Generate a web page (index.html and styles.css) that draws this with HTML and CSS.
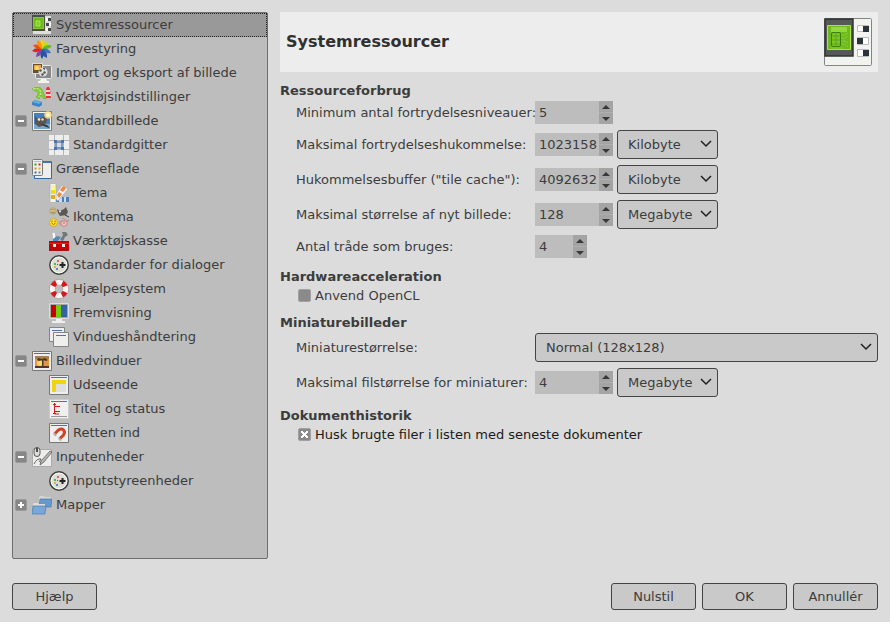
FILE: index.html
```html
<!DOCTYPE html>
<html lang="da">
<head>
<meta charset="utf-8">
<meta name="viewport" content="width=device-width, initial-scale=1">
<title>Systemressourcer</title>
<link rel="stylesheet" href="styles.css">
</head>
<body>
<div class="dialog">
<div class="panes">
<nav class="tree" aria-label="Kategorier">
<ul>
<li><a class="row selected" href="#"><svg class="icon" viewBox="0 0 20 20"><rect x=".5" y=".5" width="19" height="19" fill="#dededb" stroke="#999"/><path d="M0 0h13v16H0z" fill="#4a4e4c"/><path d="M1 2h11v12H1z" fill="#83ca2e"/><path d="M2 3h9v10H2z" fill="#6fb81c"/><path d="M4 6h4v5H4z" fill="#82cf2b" stroke="#b5e96c" stroke-width=".8"/><path d="M14 3h2v3h-2zM17 8h2v3h-2zM14 13h2v3h-2z" fill="#fff"/><path d="M16 3h3v3h-3zM14 8h3v3h-3zM16 13h3v3h-3z" fill="#41464a"/></svg>Systemressourcer</a></li>
<li><a class="row" href="#"><svg class="icon" viewBox="0 0 20 20"><path d="M10 10Q6.500 5 10 0q3.500 5 0 10" fill="#fcd20b"/><path d="M10 10q-1-6 6-8 0 6-6 8" fill="#c7dc25"/><path d="M10 10q4-6 10-3-4 4-10 3" fill="#62bd1a"/><path d="M10 10q6-2 9 4-6 1-9-4" fill="#3b75bd"/><path d="M10 10q6 3 5 9-6-2-5-9" fill="#3152a4"/><path d="M10 10q3 6 0 10-3-4 0-10" fill="#17579c"/><path d="M10 10q0 7-6 8 0-6 6-8" fill="#8048a4"/><path d="M10 10Q5 15 0 12q4-5 10-2" fill="#d8232e"/><path d="M10 10Q4 11 1 6q6-2 9 4" fill="#ef4b19"/><path d="M10 10Q4 7 5 1q6 2 5 9" fill="#ff950c"/></svg>Farvestyring</a></li>
<li><a class="row" href="#"><svg class="icon" viewBox="0 0 20 20"><rect x="3.500" y="2.500" width="16" height="13" rx="1" fill="#888" stroke="#e8e8e8"/><path d="M9 16h5l1 2h2v2H6v-2h2z" fill="#f2f2f0"/><rect x=".5" y=".5" width="10" height="10" fill="#6c4e2c" stroke="#d9d9d5"/><path d="M2 2h7v5H2z" fill="#e7a54d"/><circle cx="5" cy="5" r="2" fill="#ffdf6a"/><circle cx="11" cy="9" r="4.500" fill="#dedede"/><path d="M7 7l2-1 1 2-2 1zm4 2 2-1 1 2-2 1zm0-4 2 0v2l-2-1zm-1 5 2 1-1 2-2-1z" fill="#565a5c"/></svg>Import og eksport af billede</a></li>
<li><a class="row" href="#"><svg class="icon" viewBox="0 0 20 20"><path d="M0 2Q9-3 11 5l3 7-3-1-2-3-2 4-3-2Q9 5 3 4z" fill="#8ace3c" stroke="#69a82b" stroke-width=".6"/><path d="M1 2Q8 0 9 6l-2 4" fill="none" stroke="#d9f5ac" stroke-dasharray="2 1.500"/><path d="M14 11h5l-1-9-1-2h-2l-1 2z" fill="#e3323c"/><path d="M14 4h4M14 8h5" stroke="#fff" stroke-width="1.500"/><path d="M0 15l3-2 7 2v3l-3 2-7-2z" fill="#3c86c5"/><path d="M0 15l3-2 7 2-3 2z" fill="#68a9d9"/></svg>Værktøjsindstillinger</a></li>
<li><div class="branch"><button class="expander" type="button" aria-label="Fold sammen" aria-expanded="true"></button><a class="row" href="#"><svg class="icon" viewBox="0 0 20 20"><path d="M.5.500h19v19H.5z" fill="#f3f3f1" stroke="#777b78"/><path d="M2 2h16v16H2z" fill="#4a7eb8"/><path d="M2 13h16v5H2z" fill="#7ba8d1"/><path d="M3 5l3 3 5-2 3-2 1 5-2 5-6 2-4-3z" fill="#5b554d"/><circle cx="7" cy="8.500" r="1.300" fill="#eee"/><circle cx="10.500" cy="8.500" r="1.200" fill="#ddd"/><path d="M8 13l7 1 3 3-4-1z" fill="#353535"/><circle cx="16" cy="4" r="3.800" fill="#ffe184" opacity=".85"/><circle cx="16" cy="4" r="2" fill="#fffac8"/></svg>Standardbillede</a></div>
<ul>
<li><a class="row" href="#"><svg class="icon" viewBox="0 0 20 20"><path d="M0 0h20v20H0z" fill="#eeeeec"/><path d="M5.500 0v20M14.500 0v20M0 5.500h20M0 14.500h20" stroke="#b5b5b5"/><path d="M7 7h6v6H7z" fill="#d5dce6" stroke="#5b82b5" stroke-width="1.500"/><path d="M5 5h3v3H5zM12 5h3v3h-3zM5 12h3v3H5zM12 12h3v3h-3z" fill="#4b76ad"/></svg>Standardgitter</a></li>
</ul></li>
<li><div class="branch"><button class="expander" type="button" aria-label="Fold sammen" aria-expanded="true"></button><a class="row" href="#"><svg class="icon" viewBox="0 0 20 20"><path d="M2.500 2.500h17v17h-17z" fill="#eee" stroke="#3369aa"/><path d="M3 2h16v2H3z" fill="#3e75b7"/><rect x=".5" y=".5" width="10" height="16" rx="1" fill="#efefeb" stroke="#777b78"/><path d="M2 2.500h7" stroke="#bbb"/><path d="M2.500 4.500h2v2h-2z" fill="#3c9b20"/><path d="M6.500 4.500h2v2h-2z" fill="#ce2929"/><path d="M2.500 8.500h2v2h-2z" fill="#e68520"/><path d="M6.500 8.500h2v2h-2z" fill="#e4b119"/><path d="M2.500 12.500h2v2h-2z" fill="#3671b2"/><path d="M6.500 12.500h2v2h-2z" fill="#7f8589"/></svg>Grænseflade</a></div>
<ul>
<li><a class="row" href="#"><svg class="icon" viewBox="0 0 20 20"><path d="M6 14h14v5H6z" fill="#4f80b5"/><path d="M10 14h3v5h-3zM15 14h2v5h-2z" fill="#c3dcf2"/><path d="M5 14L13 2l6 4-10 12z" fill="#eee" stroke="#aaa" stroke-width=".6"/><path d="M8 12l2-3 3 2-3 4zM11 7l3-4 3 2-3 4z" fill="#f28b35"/><rect x="1" y=".5" width="6" height="19" rx="1" fill="#f5f5ed" stroke="#aaa" stroke-width=".7"/><path d="M2 2h4v4H2z" fill="#fff38c"/><path d="M2 7h4v4H2z" fill="#f5dc18"/><path d="M2 12h4v4H2z" fill="#d3b50c"/></svg>Tema</a></li>
<li><a class="row" href="#"><svg class="icon" viewBox="0 0 20 20"><circle cx="4" cy="4" r="3.300" fill="#cdbd8b" stroke="#aa9862" stroke-width=".6"/><path d="M2 5q2 2 4 0M3 2v1M5 2v1" fill="none" stroke="#857445" stroke-width=".8"/><path d="M8 2l3 2 4-2 2-2 2 5-2 3-6 1-2-3z" fill="#5b5751"/><circle cx="11" cy="4.500" r="1" fill="#eee"/><path d="M16 8l4 2" stroke="#333"/><circle cx="4.500" cy="15.500" r="4" fill="#ffdf30" stroke="#c99e22" stroke-width=".7"/><path d="M3 13.500v1.500M6 13.500v1.500M2.500 16q2 3 4 0" fill="none" stroke="#76540c" stroke-width=".8"/><path d="M12 14h6v4q-3 3-6 0zM12 15q-3-1 0 3M13 12q2-2 3 1M18 14l2-1" fill="#efc2bc" stroke="#bd7777" stroke-width=".8"/><circle cx="15" cy="16" r=".8" fill="#c55"/></svg>Ikontema</a></li>
<li><a class="row" href="#"><svg class="icon" viewBox="0 0 20 20"><path d="M3 2l3-1 1 8-3 1z" fill="#fff" stroke="#aaa" stroke-width=".6"/><path d="M4 8l4-3 4 1-4 5H4z" fill="#5189bb"/><path d="M11 9l3-5-1-3 4 0 2 3-3 2-2 4z" fill="#73787a"/><path d="M0 11h20v8.500H0z" fill="#c90000"/><path d="M0 10.500h20M0 19.500h20" stroke="#9b1515"/><path d="M0 12.500h20" stroke="#de2525"/><path d="M4 13v3h3v-3zM13 13v3h3v-3z" fill="#eee"/></svg>Værktøjskasse</a></li>
<li><a class="row" href="#"><svg class="icon" viewBox="0 0 20 20"><circle cx="10" cy="10" r="9.200" fill="#ddddd7" stroke="#3c3e3c" stroke-width="1.500"/><circle cx="10" cy="10" r="7.800" fill="none" stroke="#fafaf6"/><path d="M13.500 7v6M10.500 10h6" stroke="#222" stroke-width="2"/><path d="M8 5h2v2H8z" fill="#d66"/><path d="M5 8h2v2H5z" fill="#5fae50"/><path d="M5 11h2v2H5z" fill="#d4b544"/><path d="M7 13h2v2H7z" fill="#5c8abc"/><path d="M8 9h1v1H8z" fill="#c33"/></svg>Standarder for dialoger</a></li>
<li><a class="row" href="#"><svg class="icon" viewBox="0 0 20 20"><circle cx="10" cy="10" r="6.800" fill="none" stroke="#f7f7f5" stroke-width="5.500"/><circle cx="10" cy="10" r="6.800" fill="none" stroke="#d9161d" stroke-width="5.500" stroke-dasharray="4.500 6.181" stroke-dashoffset="-3.090"/><circle cx="10" cy="10" r="9.600" fill="none" stroke="#a88d87" stroke-width=".6"/><circle cx="10" cy="10" r="4" fill="none" stroke="#a7a7a7" stroke-width=".6"/></svg>Hjælpesystem</a></li>
<li><a class="row" href="#"><svg class="icon" viewBox="0 0 20 20"><rect x=".5" y=".5" width="19" height="15" rx="1" fill="#f5f5f3" stroke="#ddd"/><path d="M2 2h5v12H2z" fill="#c80000"/><path d="M7 2h5v12H7z" fill="#73ca17"/><path d="M12 2h6v12h-6z" fill="#3561a5"/><path d="M1.500 1.500h17v13h-17z" fill="none" stroke="#555" stroke-width=".5"/><path d="M7 16h6v2h3v2H3v-2h4z" fill="#eee"/></svg>Fremvisning</a></li>
<li><a class="row" href="#"><svg class="icon" viewBox="0 0 20 20"><path d="M.5.500h15v14H.5z" fill="#eee" stroke="#858585"/><path d="M3 3.500h10" stroke="#4a74ad"/><path d="M4.500 5.500h15v14h-15z" fill="#efefed" stroke="#858585"/><path d="M7 8.500h10" stroke="#4a74ad"/></svg>Vindueshåndtering</a></li>
</ul></li>
<li><div class="branch"><button class="expander" type="button" aria-label="Fold sammen" aria-expanded="true"></button><a class="row" href="#"><svg class="icon" viewBox="0 0 20 20"><path d="M.5.500h19v19H.5z" fill="#eee" stroke="#777"/><path d="M2 2.500h16" stroke="#4a74ad"/><path d="M3 5h14v12H3z" fill="#df9840"/><path d="M3 5h14v3H3z" fill="#a4834f"/><circle cx="8" cy="12" r="3" fill="#ffd661"/><path d="M3 15h14v2H3zM10 9h1.500v6H10zM6 7l4 1 3-1 3 2-2 1-3-1-4 1-2-1z" fill="#4e3925"/></svg>Billedvinduer</a></div>
<ul>
<li><a class="row" href="#"><svg class="icon" viewBox="0 0 20 20"><path d="M.5.500h19v19H.5z" fill="#eee" stroke="#777"/><path d="M2 2.500h16" stroke="#4a74ad"/><path d="M3 5h14v4H7v8H3z" fill="#f0d410"/><path d="M7 9h10v8H7z" fill="#dededc"/></svg>Udseende</a></li>
<li><a class="row" href="#"><svg class="icon" viewBox="0 0 20 20"><path d="M.5.500h19v19H.5z" fill="#f0f0ee" stroke="#ccc"/><path d="M2 2.500h16" stroke="#4a74ad"/><path d="M2 17.500h16" stroke="#999"/><path d="M5.500 4v3.500H11M5.500 7.500v5H11M5.500 12v3H10M4 5.500h3M4 14.500h3" fill="none" stroke="#d71920"/></svg>Titel og status</a></li>
<li><a class="row" href="#"><svg class="icon" viewBox="0 0 20 20"><path d="M.5.500h19v19H.5z" fill="#eee" stroke="#777"/><path d="M2 2.500h16" stroke="#4a74ad"/><path d="M5.500 11l4-4q3-2 5 0t0 5l-4 4" fill="none" stroke="#cc4428" stroke-width="3"/><path d="M4 11l1.500-1.500L8 12l-1.500 1.500zM9 16l1.500-1.500L13 17l-1.500 1z" fill="#a7adb0"/></svg>Retten ind</a></li>
</ul></li>
<li><div class="branch"><button class="expander" type="button" aria-label="Fold sammen" aria-expanded="true"></button><a class="row" href="#"><svg class="icon" viewBox="0 0 20 20"><path d="M.5 2.500h19v17H.5z" fill="#ededeb" stroke="#aaa"/><path d="M2 17q3-6 7-5-3 3 0 4" fill="none" stroke="#444" stroke-width=".8"/><path d="M8 18l1-4 9-10 2 1-8 10z" fill="#b5b5b3" stroke="#555" stroke-width=".7"/><rect x="2" y=".5" width="6" height="9" rx="3" fill="#ddd" stroke="#555"/><path d="M5 1v4" stroke="#222" stroke-width="1.500"/></svg>Inputenheder</a></div>
<ul>
<li><a class="row" href="#"><svg class="icon" viewBox="0 0 20 20"><circle cx="10" cy="10" r="9.200" fill="#ddddd7" stroke="#3c3e3c" stroke-width="1.500"/><circle cx="10" cy="10" r="7.800" fill="none" stroke="#fafaf6"/><path d="M13.500 7v6M10.500 10h6" stroke="#222" stroke-width="2"/><path d="M8 5h2v2H8z" fill="#d66"/><path d="M5 8h2v2H5z" fill="#5fae50"/><path d="M5 11h2v2H5z" fill="#d4b544"/><path d="M7 13h2v2H7z" fill="#5c8abc"/><path d="M8 9h1v1H8z" fill="#c33"/></svg>Inputstyreenheder</a></li>
</ul></li>
<li><div class="branch"><button class="expander closed" type="button" aria-label="Fold ud" aria-expanded="false"></button><a class="row" href="#"><svg class="icon" viewBox="0 0 20 20"><path d="M7 2l1-1h4l1 1h6v10H7z" fill="#d6d6d3"/><path d="M8 4h12l-1 8H7z" fill="#6798cb" stroke="#477db7" stroke-width=".7"/><path d="M1 9l1-1h4l1 1h6v10H1z" fill="#ddd"/><path d="M1 11h13l-1 8H0z" fill="#78a8d8" stroke="#477db7" stroke-width=".7"/></svg>Mapper</a></div></li>
</ul>
</nav>
<main class="page">
<header class="banner">
<h1>Systemressourcer</h1>
<svg class="banner-icon" viewBox="0 0 48 48"><rect x=".5" y=".5" width="47" height="47" rx="1" fill="#f2f2f0" stroke="#85867f"/><path d="M1 1h28v37H1z" fill="#555856" stroke="#2e3436" stroke-width="1.500"/><path d="M3.500 7.500h23v24h-23z" fill="#6fb91c" stroke="#a8e34a"/><path d="M7 9h16v5H7z" fill="#93d93b"/><path d="M17 17h3l4-2M17 20h4l3-2M17 23h4l3 2M17 26h3l4 3M7 30h12" fill="none" stroke="#88cf33"/><rect x="7.500" y="14.500" width="9" height="14" rx="1.500" fill="#7ac724" stroke="#3c7911"/><path d="M12 14v15M8 18h8M8 22h8M8 26h8" stroke="#5b9d22" stroke-width=".8"/><path d="M33.500 7.500h11v6h-11zM33.500 19.500h11v7h-11zM33.500 31.500h11v7h-11z" fill="#fff" stroke="#bbb"/><path d="M39 8h6v6h-6zM33 20h6v6h-6zM39 32h6v6h-6z" fill="#2b3338"/></svg>
</header>

<section class="group">
<h2>Ressourceforbrug</h2>
<div class="fields">
<div class="field"><label for="undo">Minimum antal fortrydelsesniveauer:</label><div class="spin"><input id="undo" value="5"><span class="steps"><button type="button" aria-label="Forøg"></button><button type="button" aria-label="Formindsk"></button></span></div></div>
<div class="field"><label for="mem">Maksimal fortrydelseshukommelse:</label><div class="spin"><input id="mem" value="1023158"><span class="steps"><button type="button" aria-label="Forøg"></button><button type="button" aria-label="Formindsk"></button></span></div><div class="combo"><select aria-label="Enhed for hukommelse"><option>Kilobyte</option><option>Megabyte</option></select><svg viewBox="0 0 12 8"><path d="M1 1l5 5 5-5"/></svg></div></div>
<div class="field"><label for="cache">Hukommelsesbuffer ("tile cache"):</label><div class="spin"><input id="cache" value="4092632"><span class="steps"><button type="button" aria-label="Forøg"></button><button type="button" aria-label="Formindsk"></button></span></div><div class="combo"><select aria-label="Enhed for buffer"><option>Kilobyte</option><option>Megabyte</option></select><svg viewBox="0 0 12 8"><path d="M1 1l5 5 5-5"/></svg></div></div>
<div class="field"><label for="size">Maksimal størrelse af nyt billede:</label><div class="spin"><input id="size" value="128"><span class="steps"><button type="button" aria-label="Forøg"></button><button type="button" aria-label="Formindsk"></button></span></div><div class="combo"><select aria-label="Enhed for billede"><option>Megabyte</option><option>Kilobyte</option></select><svg viewBox="0 0 12 8"><path d="M1 1l5 5 5-5"/></svg></div></div>
<div class="field"><label for="threads">Antal tråde som bruges:</label><div class="spin narrow"><input id="threads" value="4"><span class="steps"><button type="button" aria-label="Forøg"></button><button type="button" aria-label="Formindsk"></button></span></div></div>
</div>
</section>

<section class="group">
<h2>Hardwareacceleration</h2>
<label class="check"><input type="checkbox">Anvend OpenCL</label>
</section>

<section class="group">
<h2>Miniaturebilleder</h2>
<div class="fields">
<div class="field"><label for="thumb">Miniaturestørrelse:</label><div class="combo wide"><select id="thumb"><option>Normal (128x128)</option></select><svg viewBox="0 0 12 8"><path d="M1 1l5 5 5-5"/></svg></div></div>
<div class="field"><label for="file">Maksimal filstørrelse for miniaturer:</label><div class="spin"><input id="file" value="4"><span class="steps"><button type="button" aria-label="Forøg"></button><button type="button" aria-label="Formindsk"></button></span></div><div class="combo"><select aria-label="Enhed for fil"><option>Megabyte</option><option>Kilobyte</option></select><svg viewBox="0 0 12 8"><path d="M1 1l5 5 5-5"/></svg></div></div>
</div>
</section>

<section class="group">
<h2>Dokumenthistorik</h2>
<label class="check hover"><input type="checkbox" checked>Husk brugte filer i listen med seneste dokumenter</label>
</section>
</main>
</div>
<footer class="actions">
<button class="push help" type="button">Hjælp</button>
<button class="push" type="button">Nulstil</button>
<button class="push" type="button">OK</button>
<button class="push" type="button">Annullér</button>
</footer>
</div>
</body>
</html>
```
FILE: styles.css
```css
* {
  box-sizing: border-box;
}

body {
  margin: 0;
  background: #dcdcdc;
  color: #3c3c3c;
  font: 13px/16px "DejaVu Sans", sans-serif;
}

button,
input,
select {
  margin: 0;
  color: inherit;
  font: inherit;
}

.dialog {
  display: flex;
  flex-direction: column;
  gap: 24px;
  min-height: 100vh;
  padding: 12px;
}

.panes {
  display: grid;
  grid-template-columns: 256px 1fr;
  flex: 1;
  gap: 12px;
}

/* Category tree */
.tree {
  border: 1px solid #6e6e6e;
  border-radius: 2px;
  background: #bdbdbd;
}

.tree ul {
  margin: 0;
  padding: 0;
  list-style: none;
}

.row {
  display: flex;
  flex: 1;
  align-items: center;
  gap: 4px;
  height: 24px;
  padding-left: 19px;
  color: inherit;
  text-decoration: none;
  white-space: nowrap;
}

.selected {
  background: #999;
  outline: 1px dotted #222;
  outline-offset: -1px;
}

.branch {
  display: flex;
  align-items: center;
  padding-left: 2px;
}

.branch .row {
  padding-left: 5px;
}

.tree ul ul .row {
  padding-left: 36px;
}

.icon {
  flex: none;
  width: 20px;
  height: 20px;
}

.expander {
  width: 12px;
  height: 12px;
  padding: 0;
  border: 1px solid #999;
  border-radius: 2px;
  background: linear-gradient(#fff, #fff) center / 6px 2px no-repeat, #868686;
}

.expander.closed {
  background: linear-gradient(#fff, #fff) center / 6px 2px no-repeat,
    linear-gradient(#fff, #fff) center / 2px 6px no-repeat, #868686;
}

/* Settings page */
.page {
  display: flex;
  flex-direction: column;
  gap: 11px;
  min-width: 0;
}

.banner {
  display: flex;
  align-items: center;
  justify-content: space-between;
  padding: 6px;
  background: #ededed;
}

.banner h1 {
  margin: 0;
  color: #303030;
  font-size: 16px;
  line-height: 20px;
}

.banner-icon {
  width: 48px;
  height: 48px;
}

.group h2 {
  margin: 0 0 2px;
  font-size: 13px;
  line-height: 16px;
}

.fields {
  display: flex;
  flex-direction: column;
  gap: 6px;
  padding-left: 16px;
}

.field {
  display: grid;
  grid-template-columns: 235px 78px 101px 1fr;
  align-items: center;
  column-gap: 4px;
}

.field label {
  white-space: nowrap;
}

.spin {
  display: flex;
  height: 23px;
  background: #bdbdbd;
}

.narrow {
  width: 52px;
}

.spin input {
  flex: 1;
  min-width: 0;
  padding: 0 0 0 4px;
  border: 0;
  background: none;
}

.steps {
  display: grid;
  grid-template-rows: 11px 12px;
  width: 14px;
}

.steps button {
  display: grid;
  place-items: center;
  padding: 0;
  border: 0;
  background: #a4a4a4;
}

.steps button + button {
  border-top: 1px solid #b0b0b0;
}

.steps button::before {
  border: 4px solid transparent;
  border-top-width: 0;
  border-bottom-color: #383838;
  content: "";
}

.steps button + button::before {
  border-width: 4px 4px 0;
  border-top-color: #383838;
}

.combo {
  position: relative;
  grid-column: 3;
  margin-left: 0;
}

.combo.wide {
  grid-column: 2 / -1;
}

.combo select {
  display: block;
  width: 100%;
  height: 29px;
  padding: 0 24px 0 10px;
  border: 1px solid #444;
  border-radius: 3px;
  appearance: none;
  background: #c9c9c9;
}

.combo svg {
  position: absolute;
  top: 10px;
  right: 6px;
  width: 12px;
  height: 8px;
  fill: none;
  stroke: #202020;
  stroke-width: 1.5;
  pointer-events: none;
}

.check {
  display: flex;
  align-items: center;
  gap: 4px;
  height: 17px;
  padding-left: 18px;
}

.check input {
  display: grid;
  place-items: center;
  width: 13px;
  height: 13px;
  border: 1px solid #a0a0a0;
  border-radius: 2px;
  appearance: none;
  background: #8a8a8a;
}

.check input:checked::before {
  width: 7px;
  height: 7px;
  background: linear-gradient(45deg, transparent 38%, #fff 38% 62%, transparent 62%),
    linear-gradient(-45deg, transparent 38%, #fff 38% 62%, transparent 62%);
  content: "";
}

.hover {
  color: #1a1a1a;
}

/* Dialog buttons */
.actions {
  display: flex;
  gap: 6px;
}

.push {
  width: 85px;
  height: 27px;
  padding: 0;
  border: 1px solid #444;
  border-radius: 3px;
  background: #c9c9c9;
}

.help {
  margin-right: auto;
}
```
